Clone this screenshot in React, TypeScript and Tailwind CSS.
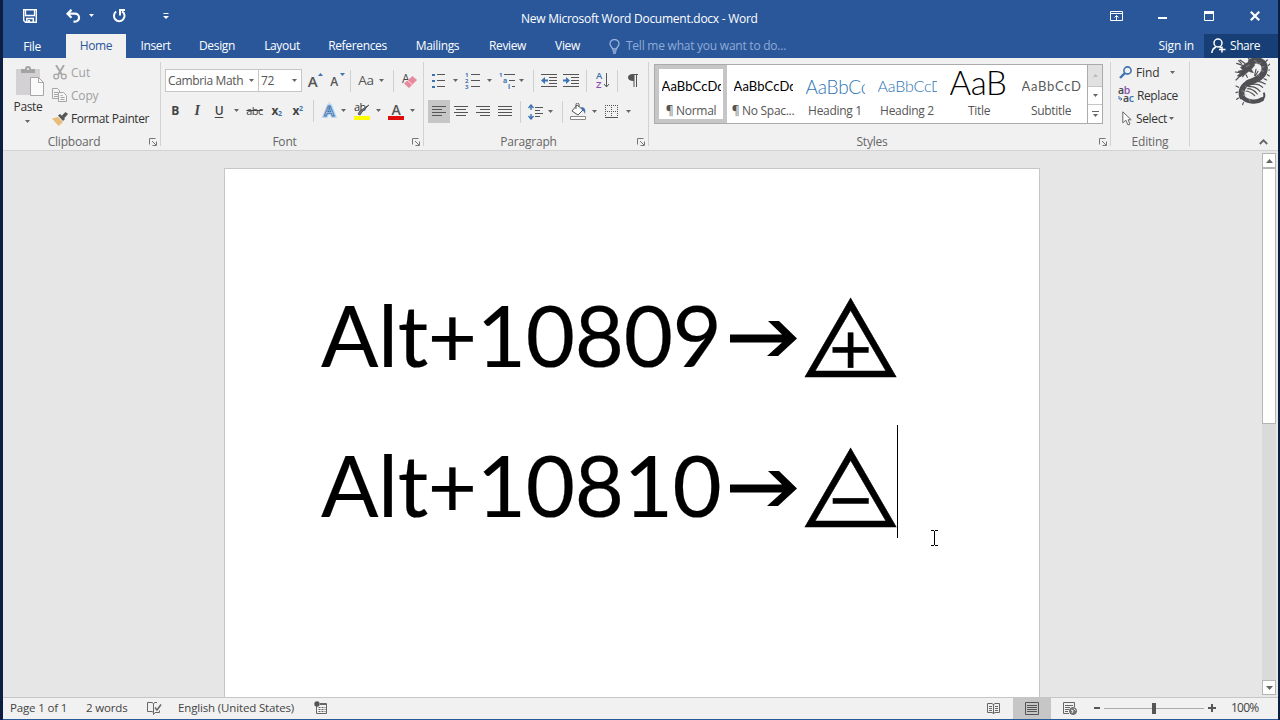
import React from "react";

interface CellProps {
  className?: string;
  children?: React.ReactNode;
}

interface StyleItem {
  sample: string;
  name: string;
  sampleClass: string;
  selected?: boolean;
}

const styleItems: StyleItem[] = [
  {
    sample: "AaBbCcDd",
    name: "¶ Normal",
    sampleClass: "text-[13px] text-black tracking-[0.1px]",
    selected: true,
  },
  {
    sample: "AaBbCcDd",
    name: "¶ No Spac...",
    sampleClass: "text-[13px] text-black tracking-[0.1px]",
  },
  {
    sample: "AaBbCc",
    name: "Heading 1",
    sampleClass: "text-[19px] font-light text-[#2e74b5] tracking-[-0.2px]",
  },
  {
    sample: "AaBbCcD",
    name: "Heading 2",
    sampleClass: "text-[16px] font-light text-[#2e74b5] tracking-[-0.2px] pb-[1px]",
  },
  {
    sample: "AaB",
    name: "Title",
    sampleClass: "text-[33px] font-light text-black tracking-[-0.4px] pb-[8px]",
  },
  {
    sample: "AaBbCcD",
    name: "Subtitle",
    sampleClass: "text-[13px] text-[#5a5a5a] tracking-[0.7px]",
  },
];

const tabs = [
  { label: "Insert", className: "w-[59px]" },
  { label: "Design", className: "w-[64px]" },
  { label: "Layout", className: "w-[66px]" },
  { label: "References", className: "w-[85px]" },
  { label: "Mailings", className: "w-[75px]" },
  { label: "Review", className: "w-[65px]" },
  { label: "View", className: "w-[55px]" },
];

const Cell: React.FC<CellProps> = ({ className = "", children }) => (
  <div className={`flex h-full shrink-0 items-center justify-center ${className}`}>
    {children}
  </div>
);

const Caret: React.FC<{ className?: string }> = ({ className = "" }) => (
  <svg className={`shrink-0 ${className}`} width="5" height="3" viewBox="0 0 5 3">
    <path d="M0 0h5L2.500 3z" fill="#666" />
  </svg>
);

const Rule: React.FC<{ className?: string }> = ({ className = "" }) => (
  <div className={`h-[22px] w-px shrink-0 bg-[#d0d0d0] ${className}`} />
);

const Launcher = () => (
  <svg width="8" height="8" viewBox="0 0 8 8" fill="none" stroke="#777">
    <path d="M.5 6.500V.5H6.500" />
    <path d="M3 3l4 4M7.500 3.500v4h-4" />
  </svg>
);

const Group: React.FC<{
  label: string;
  className: string;
  launcher?: boolean;
  children: React.ReactNode;
}> = ({ label, className, launcher = true, children }) => (
  <section className={`flex h-[92px] shrink-0 flex-col ${className}`}>
    <div className="h-[75px] shrink-0">{children}</div>
    <div className="flex h-[18px] shrink-0 items-center text-[#666]">
      <div className={`flex-1 text-center tracking-[-0.2px] ${launcher ? "pl-[4px]" : ""}`}>
        {label}
      </div>
      {launcher && (
        <div className="mr-[2px] w-[17px] pl-[8px]">
          <Launcher />
        </div>
      )}
    </div>
  </section>
);

const GroupRule = () => <div className="mt-1 h-[84px] w-px shrink-0 bg-[#d2d2d2]" />;

/* Horizontal text lines, given as [x, width] for each row */
const Lines: React.FC<{ rows: [number, number][]; width: number; step?: number }> = ({
  rows,
  width,
  step = 3,
}) => (
  <svg width={width} height={rows.length * step} shapeRendering="crispEdges">
    {rows.map(([x, w], i) => (
      <rect key={i} x={x} y={i * step} width={w} height="1" fill="#555" />
    ))}
  </svg>
);

function TitleBar() {
  return (
    <header className="relative flex h-[34px] items-start text-white">
      <svg className="ml-5 mt-[9px]" width="14" height="14" fill="none" stroke="white">
        <path d="M.7.7h12.600v12.600H2.500L.7 11.500z" strokeWidth="1.400" />
        <path d="M2.500 1v5.500h9V1" strokeWidth="1.300" />
        <path d="M3.800 13.500V9.500h6.500v4" strokeWidth="1.500" />
        <path d="M5 11h2v3H5z" fill="white" stroke="none" />
      </svg>
      <svg className="ml-[29px] mt-[9px]" width="15" height="14" fill="none" stroke="white" strokeWidth="2.200">
        <path d="M5.500.7 1.500 4.700l4 4M2 4.700h7a4 3.900 0 0 1 0 7.900H7.500" />
      </svg>
      <svg className="ml-2 mt-[14px]" width="5" height="3">
        <path d="M0 0h5L2.500 3z" fill="white" />
      </svg>
      <svg className="ml-[18px] mt-[8px]" width="15" height="15" fill="none" stroke="white" strokeWidth="2">
        <path d="M4.200 3.500a5.300 5.300 0 1 0 5.800-.2" />
        <path d="M8 7.500V2h5" />
      </svg>
      <svg className="ml-[36px] mt-[13px]" width="6" height="6">
        <path d="M.5.500h5" stroke="white" />
        <path d="M0 3h6L3 6z" fill="white" />
      </svg>
      <h1 className="absolute left-[518px] top-[10px] text-[12px] leading-[18px] tracking-[-0.26px] whitespace-nowrap">
        New Microsoft Word Document.docx - Word
      </h1>
      <div className="ml-auto flex h-[34px] pr-[18px]">
        <svg className="mt-[11px]" width="13" height="10" fill="none" stroke="white">
          <path d="M.5.500h12v9H.5zM.5 2.500h12M6.500 9V4.500M4.500 6.500l2-2 2 2" />
        </svg>
        <svg className="ml-[35px] mt-[17px]" width="9" height="2">
          <path d="M0 1h9" stroke="white" strokeWidth="2" />
        </svg>
        <svg className="ml-[37px] mt-[11px]" width="10" height="10" fill="none" stroke="white">
          <path d="M.5.500h9v9h-9z" />
          <path d="M0 1.500h10" strokeWidth="3" />
        </svg>
        <svg className="ml-[36px] mt-[11px]" width="10" height="10" stroke="white" strokeWidth="2.200">
          <path d="m.8.800 8.400 8.400M9.200.800.8 9.200" />
        </svg>
      </div>
    </header>
  );
}

function TabBar() {
  return (
    <nav className="flex h-6 items-center text-white">
      <div className="w-[58px] pt-[2px] text-center">File</div>
      <div className="ml-[5px] flex h-6 w-[60px] items-center justify-center bg-[#f1f1f1] text-[#2a579a]">
        Home
      </div>
      {tabs.map((tab) => (
        <div key={tab.label} className={`text-center ${tab.className}`}>
          {tab.label}
        </div>
      ))}
      <svg className="ml-[14px]" width="11" height="15" fill="none" stroke="#9db5dc" strokeWidth="1.300">
        <path d="M3.500 10C3.500 8 1 7.500 1 4.800a4.500 4.300 0 0 1 9 0C10 7.500 7.500 8 7.500 10zM3.500 12h4M4 14h3" />
      </svg>
      <div className="ml-[6px] text-[#8fabd6] tracking-[-0.24px]">Tell me what you want to do...</div>
      <div className="ml-auto mr-[10px] tracking-[-0.2px]">Sign in</div>
      <div className="flex h-6 w-[74px] items-center bg-[#173f76] pl-[7px]">
        <svg width="15" height="16" fill="none" stroke="white" strokeWidth="1.500">
          <circle cx="7" cy="5" r="4" />
          <path d="M.8 15c.3-3 2-5 4.200-6M8.500 9c1 .3 1.500 1 1.500 1M11 8.500v6M8 11.500h6.500" />
        </svg>
        <span className="ml-[4px] tracking-[-0.45px]">Share</span>
      </div>
    </nav>
  );
}

function Clipboard() {
  return (
    <Group label="Clipboard" className="w-[157px]">
      <div className="flex">
        <div className="flex w-[50px] flex-col items-center pt-[8px] text-[#333]">
          <svg className="ml-[3px]" width="28" height="30" fill="none">
            <path d="M0 3h24v26H0z" fill="#d3d1d3" />
            <path d="M5 7V3h4a3 3 0 0 1 6 0h4v4z" fill="#a3a3a3" />
            <circle cx="12" cy="3" r="1" fill="#f1f1f1" />
            <path d="M14.500 11.500h8l5 5v13h-13z" fill="#fafafa" stroke="#a8a4a8" />
            <path d="M22.500 11.500v5h5" stroke="#a8a4a8" />
          </svg>
          <div className="mt-[2px] leading-[18px]">Paste</div>
          <Caret className="mt-[4px] -ml-[1px]" />
        </div>
        <div className="pt-[3px]">
          <div className="flex h-[23px] items-center text-[#a0a0a0]">
            <svg width="14" height="15" fill="none" stroke="#a6a6a6" strokeWidth="1.300">
              <path d="M3 0l6 10M11 0 5 10" strokeWidth="1.900" />
              <circle cx="3.200" cy="11.500" r="2.400" />
              <circle cx="10.800" cy="11.500" r="2.400" />
            </svg>
            <span className="ml-[4px] tracking-[0px]">Cut</span>
          </div>
          <div className="flex h-[23px] items-center text-[#a0a0a0]">
            <svg className="-ml-[1px]" width="16" height="15" fill="#f4f4f4" stroke="#a6a6a6">
              <path d="M.5.500h5l2 2v8h-7zM2 4.500h4M2 6.500h4M2 8.500h4" />
              <path d="M6.500 4.500h5l3 3v6h-8zM8.500 7.500h2M8.500 9.500h4M8.500 11.500h4" />
            </svg>
            <span className="ml-[3px] tracking-[-0.2px]">Copy</span>
          </div>
          <div className="flex h-[23px] items-center text-[#333]">
            <svg className="-ml-[1px]" width="16" height="14">
              <path d="M0 6.500 6 5l5 5-4.500 4z" fill="#e8bd7a" />
              <path d="m6 3.500 2-1.500 5 5-2 2z" fill="#555" />
              <path d="m9.500 4 4-4 2.500 2-4 4.500z" fill="#555" />
            </svg>
            <span className="ml-[3px] whitespace-nowrap tracking-[-0.4px]">Format Painter</span>
          </div>
        </div>
      </div>
    </Group>
  );
}

function FontGroup() {
  return (
    <Group label="Font" className="w-[262px]">
      <div className="flex h-[34px] items-center pt-[11px] pl-[4px] text-[#555]">
        <div className="flex h-[23px] w-[94px] items-center justify-between border border-[#c6c6c6] bg-white pl-[2px] pr-[4px] whitespace-nowrap">
          Cambria Math
          <Caret />
        </div>
        <div className="-ml-px flex h-[23px] w-[44px] items-center justify-between border border-[#c6c6c6] bg-white pl-[2px] pr-[4px]">
          72
          <Caret />
        </div>
        <Cell className="relative w-[22px] pr-[1px] text-[15px] font-semibold">
          A
          <svg className="absolute right-[1px] top-[4px]" width="5" height="3">
            <path d="M0 3h5L2.500 0z" fill="#3d73b1" />
          </svg>
        </Cell>
        <Cell className="relative w-[22px] pt-[2px] pr-[2px] text-[12px] font-semibold">
          A
          <svg className="absolute right-[1px] top-[4px]" width="5" height="3">
            <path d="M0 0h5L2.500 3z" fill="#3d73b1" />
          </svg>
        </Cell>
        <Rule className="ml-[4px]" />
        <Cell className="ml-[6px] w-[18px] pb-[1px] text-[13.500px]">Aa</Cell>
        <Caret className="ml-[4px]" />
        <Rule className="ml-[9px]" />
        <svg className="ml-[8px] overflow-visible" width="15" height="16">
          <text x="0" y="10" fontSize="12" fill="#444">A</text>
          <path d="m10.500 3 4.500 4-8 8-5-4.500z" fill="#e88a9b" />
          <path d="m5 7 5 4.500" stroke="#f8dfe4" />
        </svg>
      </div>
      <div className="flex h-[30px] items-center pt-[7px] pl-[4px] text-[#444]">
        <Cell className="w-[20px] font-bold">B</Cell>
        <Cell className="ml-[1px] w-[22px] font-['Liberation_Serif'] text-[14px] font-bold italic">I</Cell>
        <Cell className="w-[22px] font-semibold underline underline-offset-2">U</Cell>
        <Caret className="ml-[4px]" />
        <Cell className="ml-[7px] w-[17px] text-[11px] line-through tracking-[-0.6px]">abc</Cell>
        <Cell className="ml-[5px] w-[17px] font-bold">
          <span>
            x<sub className="text-[7px] text-[#3d73b1]">2</sub>
          </span>
        </Cell>
        <Cell className="ml-[4px] w-[17px] font-bold">
          <span>
            x<sup className="text-[7px] text-[#3d73b1]">2</sup>
          </span>
        </Cell>
        <Rule className="ml-[7px]" />
        <svg className="ml-[8px] overflow-visible" width="14" height="16">
          <text x="7" y="13" textAnchor="middle" fontSize="15" fontWeight="600" fill="white" stroke="#b5d3ee" strokeWidth="3.500">A</text>
          <text x="7" y="13" textAnchor="middle" fontSize="15" fontWeight="600" fill="white" stroke="#3d73b1" strokeWidth="1">A</text>
        </svg>
        <Caret className="ml-[5px]" />
        <svg className="ml-[8px] overflow-visible" width="17" height="18">
          <text x="0" y="9" fontSize="11" fill="#333" letterSpacing="-.5">ab</text>
          <path d="M15 3 8 10l-2 3-2-1 2-3z" fill="#777" stroke="#555" />
          <path d="M0 14h16v4H0z" fill="#ff0" />
        </svg>
        <Caret className="ml-[5px]" />
        <svg className="ml-[7px] overflow-visible" width="16" height="18">
          <text x="8" y="12.500" textAnchor="middle" fontSize="14" fontWeight="600" fill="#555">A</text>
          <path d="M0 14h16v4H0z" fill="#e00b0b" />
        </svg>
        <Caret className="ml-[6px]" />
      </div>
    </Group>
  );
}

const Bullets = () => (
  <svg width="13" height="16" shapeRendering="crispEdges">
    {[0, 6, 12].map((y) => (
      <React.Fragment key={y}>
        <path d={`M0 ${y + 1}h3v2H0z`} fill="#3d73b1" />
        <path d={`M5 ${y + 1}h8v1H5z`} fill="#555" />
      </React.Fragment>
    ))}
  </svg>
);

const Numbering = () => (
  <svg className="overflow-visible" width="15" height="17">
    {[1, 2, 3].map((n) => (
      <React.Fragment key={n}>
        <text x="0" y={n * 6 - 1} fontSize="6" fontWeight="700" fill="#3d73b1">{n}</text>
        <path d={`M6 ${n * 6 - 4}h9v1H6z`} fill="#555" />
      </React.Fragment>
    ))}
  </svg>
);

const Multilevel = () => (
  <svg className="overflow-visible" width="17" height="17">
    <text x="0" y="5" fontSize="6" fontWeight="700" fill="#3d73b1">1</text>
    <text x="4" y="11" fontSize="7" fontWeight="700" fill="#3d73b1">a</text>
    <text x="9" y="17" fontSize="7" fontWeight="700" fill="#3d73b1">i</text>
    <path d="M5 2h11v1H5zM10 8h6v1h-6zM13 14h3v1h-3z" fill="#555" />
  </svg>
);

const Indent: React.FC<{ right?: boolean }> = ({ right }) => (
  <svg width="16" height="13">
    <path d="M0 0h16v1H0zM8 3h8v1H8zM8 6h8v1H8zM8 9h8v1H8zM0 12h16v1H0z" fill="#555" />
    <path
      d={right ? "M0 5.500h3V3l4 3.500L3 10V7.500H0z" : "M7 5.500H4V3L0 6.500 4 10V7.500h3z"}
      fill="#3d73b1"
    />
  </svg>
);

function Paragraph() {
  return (
    <Group label="Paragraph" className="w-[224px]">
      <div className="flex h-[34px] items-center pt-[11px] pl-[8px]">
        <Bullets />
        <Caret className="ml-[8px]" />
        <div className="ml-[7px]"><Numbering /></div>
        <Caret className="ml-[7px]" />
        <div className="ml-[7px]"><Multilevel /></div>
        <Caret className="ml-[3px]" />
        <Rule className="ml-[9px]" />
        <div className="ml-[7px]"><Indent /></div>
        <div className="ml-[6px]"><Indent right /></div>
        <Rule className="ml-[7px]" />
        <svg className="ml-[9px] overflow-visible" width="14" height="17">
          <text x="0" y="7" fontSize="9.500" fontWeight="600" fill="#3d73b1">A</text>
          <text x="0" y="16" fontSize="9.500" fontWeight="600" fill="#8a4fb0">Z</text>
          <path d="M10.500 1v14M8 12l2.500 3 2.500-3" stroke="#555" fill="none" />
        </svg>
        <Rule className="ml-[7px]" />
        <svg className="ml-[10px]" width="11" height="13">
          <path d="M4.500 0H10v1H9v12H8V1H6.500v12h-1V7C2 7 0 5.500 0 3.500S2 0 4.500 0z" fill="#555" />
        </svg>
      </div>
      <div className="mt-[8px] flex h-[23px] items-center pl-[4px]">
        <Cell className="w-[22px] bg-[#c6c6c6]">
          <Lines width={14} rows={[[0, 14], [0, 10], [0, 14], [0, 10]]} />
        </Cell>
        <Cell className="w-[22px]">
          <Lines width={14} rows={[[0, 14], [2, 10], [0, 14], [2, 10]]} />
        </Cell>
        <Cell className="w-[22px]">
          <Lines width={14} rows={[[0, 14], [4, 10], [0, 14], [4, 10]]} />
        </Cell>
        <Cell className="w-[22px]">
          <Lines width={14} rows={[[0, 14], [0, 14], [0, 14], [0, 14]]} />
        </Cell>
        <Rule className="ml-[4px]" />
        <svg className="ml-[7px]" width="15" height="16">
          <path d="M3 1v5M3 10v5M.5 4 3 1l2.500 3M.5 12 3 15l2.500-3" stroke="#3d73b1" strokeWidth="1.400" fill="none" />
          <path d="M7 3h8v1H7zM7 6h5v1H7zM7 9h8v1H7zM7 12h5v1H7z" fill="#555" />
        </svg>
        <Caret className="ml-[5px]" />
        <Rule className="ml-[9px]" />
        <svg className="ml-[7px]" width="17" height="17" fill="none" stroke="#555">
          <path d="m7 2 6 5-5 5-6-4z" fill="white" />
          <path d="M6 6V1.500a1.500 1.500 0 0 1 3 0V4" />
          <path d="M11 4c4 0 5 3 4 7-1-2-1-3-3-4z" fill="#3d73b1" stroke="none" />
          <path d="M.5 13.500h15v3H.5z" fill="white" stroke="#888" />
        </svg>
        <Caret className="ml-[5px]" />
        <svg className="ml-[8px]" width="13" height="14" stroke="#555" fill="none">
          <path d="M.5 0v12M6.500 0v12M12.500 0v12M0 .5h13M0 6.500h13" strokeDasharray="1 1" />
          <path d="M0 12.500h13" />
        </svg>
        <Caret className="ml-[8px]" />
      </div>
    </Group>
  );
}

function StylesGroup() {
  return (
    <Group label="Styles" className="w-[461px]">
      <div className="flex h-[66px] pt-[6px] pl-[5px]">
        <div className="flex h-[60px] w-[449px] border border-[#ababab] bg-white">
          {styleItems.map((item) => (
            <div
              key={item.name}
              className={`flex h-[58px] w-[72px] shrink-0 flex-col items-center border-4 ${
                item.selected ? "border-[#c6c6c6]" : "border-transparent"
              }`}
            >
              <div
                className={`flex h-[34px] w-[59px] shrink-0 items-center overflow-hidden font-['Lato'] whitespace-nowrap leading-none ${item.sampleClass}`}
              >
                <span>{item.sample}</span>
              </div>
              <div className="h-[16px] leading-[15px] whitespace-nowrap text-[#555] tracking-[-0.3px]">
                {item.name}
              </div>
            </div>
          ))}
          <div className="ml-auto flex w-[15px] shrink-0 flex-col border-l border-[#ababab]">
            <div className="flex h-[21px] items-center justify-center bg-[#e1e1e1]">
              <svg width="5" height="3"><path d="M0 3h5L2.500 0z" fill="#bbb" /></svg>
            </div>
            <div className="flex h-[19px] items-center justify-center border-y border-[#c6c6c6]">
              <Caret />
            </div>
            <div className="flex flex-1 flex-col items-center justify-center gap-[2px]">
              <div className="h-px w-[7px] bg-[#666]" />
              <Caret />
            </div>
          </div>
        </div>
      </div>
    </Group>
  );
}

function Editing() {
  return (
    <Group label="Editing" className="w-[78px]" launcher={false}>
      <div className="pt-[3px] pl-[7px] text-[#333]">
        <div className="flex h-[23px] items-center">
          <svg className="ml-[1px]" width="14" height="13" fill="none" stroke="#3d73b1">
            <circle cx="8.500" cy="4.500" r="3.600" strokeWidth="1.600" />
            <path d="m6 7-5 5" strokeWidth="2.400" />
          </svg>
          <span className="ml-[3px] tracking-[-0.1px]">Find</span>
          <Caret className="ml-[10px]" />
        </div>
        <div className="flex h-[23px] items-center">
          <svg className="overflow-visible" width="16" height="17" fontSize="10.500" fontWeight="600">
            <text x="0" y="7" fill="#444" letterSpacing="-.3">a<tspan fill="#8a4fb0">b</tspan></text>
            <text x="5" y="15" fill="#444" letterSpacing="-.3">a<tspan fill="#3d73b1">c</tspan></text>
            <path d="M1 9v3h3M2.500 10.500 4 12l-1.500 1.500" stroke="#3d73b1" fill="none" />
          </svg>
          <span className="ml-[3px] tracking-[-0.4px]">Replace</span>
        </div>
        <div className="flex h-[23px] items-center">
          <svg className="ml-[4px]" width="10" height="15" fill="white" stroke="#666">
            <path d="M.8.800v11l3-2.600L6 14l2-1-2-4.200h3.200z" />
          </svg>
          <span className="ml-[4px] tracking-[-0.35px]">Select</span>
          <Caret className="ml-[2px]" />
        </div>
      </div>
    </Group>
  );
}

const Dragon = () => (
  <svg width="36" height="50" viewBox="0 0 108 150" fill="none" stroke="#505054" strokeLinecap="round">
    <path d="M52 11C72 2 93 10 92 32c-1 22-22 32-48 42" strokeWidth="19" />
    <path d="M46 74c-20 8-27 24-22 42" strokeWidth="17" />
    <path d="M24 114c10 19 44 21 60 10" strokeWidth="13" />
    <path d="M84 124c8-5 8-12 6-18" strokeWidth="6" />
    <path d="M50 74c16-6 30-6 44 4M48 80c16-4 28-2 38 8M44 86c16-2 26 4 34 14M40 92c14 0 22 6 30 16M36 99c12 1 18 6 26 14" strokeWidth="3.500" />
    <path d="M20 28 36 16l20-8 6 14-10 12 6 10-14-4-10 8-16 8-8-2 10-10-8-4 14-4z" fill="#505054" strokeWidth="2" />
    <path d="M18 6l14 10M8 16l18 6M22 16 14 8M4 42l14 2M6 66l14-14M26 56l6-8M36 50l4 8M46 4l-4-6M70 6l4-8M94 12l6-6M103 22l5-4M104 36h6M100 50l6 4M90 62l8 4M66 34l-4 18M72 40l-8 14M14 88 6 84M12 102l-6 2M14 120l-6 4M28 134l-2 6" strokeWidth="3.500" />
    <path d="M36 26l10-5M62 8l8 6M80 14l-6 6M90 26l-8 2M88 40l-8-4M76 54l-6-6M34 84l6 8M24 98l8 4M28 112l8-2M46 122l2 8" stroke="#a4a4a8" strokeWidth="2" />
  </svg>
);

function Ribbon() {
  return (
    <div className="flex h-[93px] border-b border-[#d2d2d2] bg-[#f1f1f1]">
      <Clipboard />
      <GroupRule />
      <FontGroup />
      <GroupRule />
      <Paragraph />
      <GroupRule />
      <StylesGroup />
      <GroupRule />
      <Editing />
      <GroupRule />
      <div className="ml-auto flex w-[44px] flex-col">
        <Dragon />
        <svg className="ml-[25px] mt-[31px]" width="9" height="6" fill="none" stroke="#666" strokeWidth="1.800">
          <path d="m.8 5 3.700-3.700L8.200 5" />
        </svg>
      </div>
    </div>
  );
}

const Arrow = () => (
  <svg className="shrink-0" width="67" height="36" aria-label="→">
    <path d="M0 13.500h52L38 0h11l18 17.500L48 35H37l15-13.500H0z" fill="black" />
  </svg>
);

const DocLine: React.FC<{ code: string; symbol: string }> = ({ code, symbol }) => (
  <div className="flex h-[150px] items-center whitespace-nowrap text-black">
    <span className="w-[409px] pb-[6px] font-['Lato'] text-[85px] leading-none tracking-[-0.35px] [-webkit-text-stroke:0.2px_black]">
      Alt+{code}
    </span>
    <div className="w-[71px] pt-[4px]">
      <Arrow />
    </div>
    <span className="pt-[2px] font-['DejaVu_Sans'] text-[111px] leading-none tracking-normal [-webkit-text-stroke:0.5px_black]">
      {symbol}
    </span>
  </div>
);

function Workspace() {
  return (
    <main className="flex h-[546px] bg-[#e6e6e6]">
      <div className="relative ml-[221px] mt-[17px] h-[529px] w-[816px] border border-b-0 border-[#c6c6c6] bg-white pl-[96px] pt-[93px]">
        <DocLine code="10809" symbol="⨹" />
        <DocLine code="10810" symbol="⨺" />
        <div className="absolute left-[672px] top-[256px] h-[113px] w-px bg-black" />
        <svg className="absolute left-[706px] top-[361px]" width="7" height="16" stroke="black" fill="none">
          <path d="M0 .5h3M4 .5h3M3.500 1v14M0 15.500h3M4 15.500h3" />
        </svg>
      </div>
      <div className="ml-auto mr-[2px] mt-[2px] flex h-[542px] w-[14px] flex-col bg-[#dadada]">
        <div className="flex h-[15px] items-center justify-center border border-[#b5b5b5] bg-white">
          <svg width="7" height="4"><path d="M0 4h7L3.500 0z" fill="#666" /></svg>
        </div>
        <div className="h-[256px] border border-[#b5b5b5] bg-white" />
        <div className="mt-auto flex h-[15px] items-center justify-center border border-[#b5b5b5] bg-white">
          <svg width="7" height="4"><path d="M0 0h7L3.500 4z" fill="#666" /></svg>
        </div>
      </div>
    </main>
  );
}

function StatusBar() {
  return (
    <footer className="flex h-[22px] items-center border-t border-[#c6c6c6] bg-[#f1f1f1] pb-[1px] pl-[7px] text-[11.500px] text-[#444] tracking-[-0.15px]">
      <span className="w-[76px]">Page 1 of 1</span>
      <span className="w-[61px]">2 words</span>
      <svg width="15" height="14" fill="none" stroke="#666">
        <path d="M6.500 2.500 5 1.500H.5v9H5l1.500 1zM6.500 2.500 8 1.500h2M6.500 11.500v2l1.500-2h4.500v-2" />
        <path d="m8 6.500 2 2.500 4-5.500" strokeWidth="1.500" />
      </svg>
      <span className="ml-[16px] w-[136px]">English (United States)</span>
      <svg width="14" height="14" fill="none" stroke="#666">
        <path d="M2.500 5v7.500h10V2.500H6M6 3.500h7" />
        <path d="M4.500 6.500h7M4.500 8.500h7M4.500 10.500h7" strokeDasharray="2 1" />
        <circle cx="3" cy="3" r="2.700" fill="#555" stroke="none" />
      </svg>
      <svg className="ml-auto" width="13" height="13" fill="none" stroke="#666">
        <path d="M6.500 2v10M.5 1.500H5l1.500 1 1.500-1h4.500v9H8l-1.500 1-1.500-1H.5z" />
        <path d="M2 4.500h3M2 6.500h3M2 8.500h3M8 4.500h3M8 6.500h3M8 8.500h3" />
      </svg>
      <div className="-mb-[1px] ml-[13px] flex h-[21px] w-[38px] items-center justify-center bg-[#c6c6c6]">
        <svg className="mb-[1px]" width="14" height="13" fill="none" stroke="#555">
          <path d="M.5.500h13v12H.5zM2 3.500h10M2 5.500h10M2 7.500h10M2 9.500h10" />
        </svg>
      </div>
      <svg className="ml-[12px]" width="14" height="13" fill="none" stroke="#666">
        <path d="M6 11.500H.5V.500h11V5M2 3.500h8M2 5.500h5M2 7.500h4M2 9.500h3" />
        <circle cx="10" cy="9" r="3.500" fill="#777" />
        <path d="M8 8l2 .5L9 11M11 6.500l1.500 2" stroke="#eee" />
      </svg>
      <div className="ml-[17px] h-[2px] w-[6px] bg-[#555]" />
      <div className="ml-[4px] flex w-[100px] items-center">
        <div className="h-px w-[48px] bg-[#aaa]" />
        <div className="h-[11px] w-[4px] bg-[#555]" />
        <div className="h-px w-[48px] bg-[#aaa]" />
      </div>
      <svg className="ml-[4px]" width="8" height="8">
        <path d="M0 4h8M4 0v8" stroke="#555" strokeWidth="2" />
      </svg>
      <span className="ml-[15px] w-[47px] tracking-[-0.75px] text-[12px]">100%</span>
    </footer>
  );
}

export default function App() {
  return (
    <div className="h-[720px] w-[1280px] overflow-hidden border-l-[3px] border-r-2 border-[#0c1f42] bg-[#2a579a] font-['Open_Sans',sans-serif] text-[12px] leading-[18px] tracking-[-0.35px]">
      <TitleBar />
      <TabBar />
      <Ribbon />
      <Workspace />
      <StatusBar />
    </div>
  );
}
